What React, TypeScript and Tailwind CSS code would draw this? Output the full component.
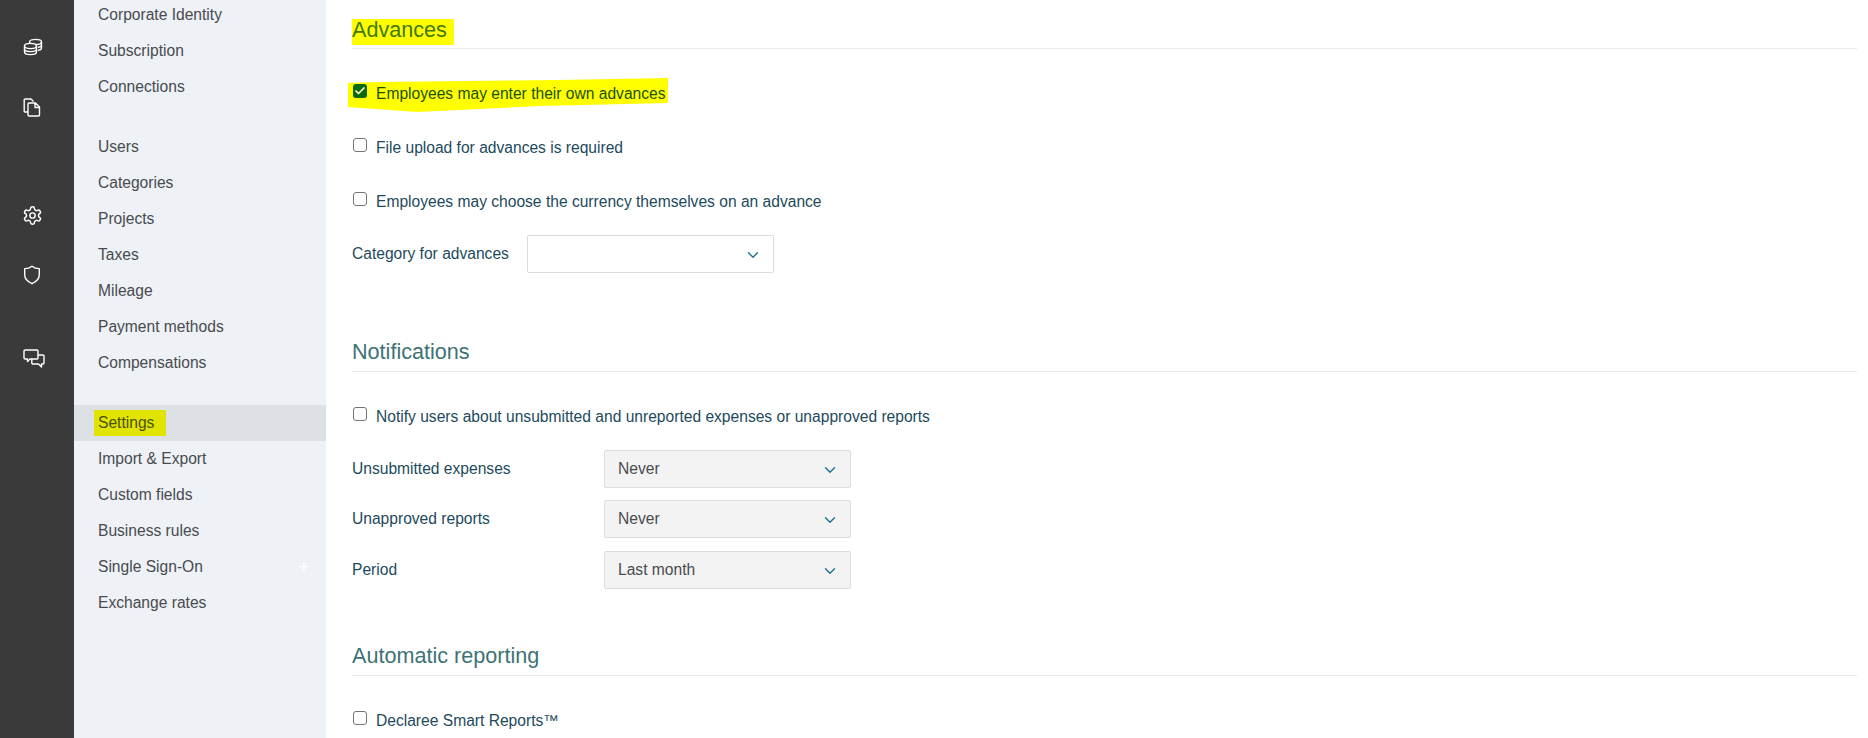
import { Check, ChevronDown } from "lucide-react";

const groupOne = ["Corporate Identity", "Subscription", "Connections"];
const groupTwo = ["Users", "Categories", "Projects", "Taxes", "Mileage", "Payment methods", "Compensations"];
const groupThree = ["Import & Export", "Custom fields", "Business rules", "Single Sign-On", "Exchange rates"];

function NavItem({ label }: { label: string }) {
	return (
		<div className="relative h-9 pl-[24px] leading-[36px] text-[#484b4f]">
			{label}
			{label === "Single Sign-On" && <span className="absolute right-[17px] top-0 text-[18px] text-white">+</span>}
		</div>
	);
}

function Rail() {
	return (
		<div className="w-[74px] shrink-0 bg-[#3a3a3a] text-white flex flex-col items-start pl-[23px]">
			<svg className="mt-[38px]" width="20" height="18" viewBox="0 0 20 18" fill="none" stroke="currentColor" strokeWidth="1.4" strokeLinecap="round">
				<ellipse cx="12.5" cy="4" rx="6" ry="2.6" />
				<path d="M18.5 4v6c0 1-1.2 2-3 2.3M18.5 7c0 1-1.2 2-3 2.3" />
				<ellipse cx="7.5" cy="8" rx="6" ry="2.6" fill="#3a3a3a" />
				<path d="M1.5 8v6c0 1.5 2.7 2.6 6 2.6s6-1.1 6-2.6V8M1.5 11c0 1.5 2.7 2.6 6 2.6s6-1.1 6-2.6" />
			</svg>
			<svg className="mt-[41px]" width="18" height="20" viewBox="0 0 18 20" fill="none" stroke="currentColor" strokeWidth="1.4" strokeLinejoin="round">
				<path d="M5 15H2.2A1 1 0 0 1 1.2 14V3a1 1 0 0 1 1-1H8l2.5 2.500" />
				<path d="M6 6h6.500l4 4v8a1 1 0 0 1-1 1H6a1 1 0 0 1-1-1V7a1 1 0 0 1 1-1zM12 6v4.500h4.500" />
			</svg>
			<svg className="mt-[88px] ml-[-1px]" width="21" height="21" viewBox="0 0 24 24" fill="none" stroke="currentColor" strokeWidth="1.7" strokeLinecap="round" strokeLinejoin="round">
				<path d="M12.22 2h-.44a2 2 0 0 0-2 2v.18a2 2 0 0 1-1 1.73l-.43.25a2 2 0 0 1-2 0l-.15-.08a2 2 0 0 0-2.73.73l-.22.38a2 2 0 0 0 .73 2.73l.15.1a2 2 0 0 1 1 1.72v.51a2 2 0 0 1-1 1.74l-.15.09a2 2 0 0 0-.73 2.73l.22.38a2 2 0 0 0 2.73.73l.15-.08a2 2 0 0 1 2 0l.43.25a2 2 0 0 1 1 1.73V20a2 2 0 0 0 2 2h.44a2 2 0 0 0 2-2v-.18a2 2 0 0 1 1-1.73l.43-.25a2 2 0 0 1 2 0l.15.08a2 2 0 0 0 2.73-.73l.22-.39a2 2 0 0 0-.73-2.73l-.15-.08a2 2 0 0 1-1-1.74v-.5a2 2 0 0 1 1-1.74l.15-.09a2 2 0 0 0 .73-2.73l-.22-.38a2 2 0 0 0-2.73-.73l-.15.08a2 2 0 0 1-2 0l-.43-.25a2 2 0 0 1-1-1.73V4a2 2 0 0 0-2-2z" />
				<circle cx="12" cy="12" r="3" />
			</svg>
			<svg className="mt-[39px]" width="18" height="20" viewBox="0 0 18 20" fill="none" stroke="currentColor" strokeWidth="1.4" strokeLinejoin="round">
				<path d="M9 1.200c2 1.600 4.500 2.400 7.300 2.400v6.200c0 4-3 7-7.300 8.900-4.300-1.900-7.300-4.900-7.300-8.900V3.600C4.500 3.600 7 2.800 9 1.200z" />
			</svg>
			<svg className="mt-[64px]" width="22" height="20" viewBox="0 0 22 20" fill="none" stroke="currentColor" strokeWidth="1.4" strokeLinejoin="round">
				<path d="M2.200 1h11.600a1.200 1.200 0 0 1 1.200 1.200v6.600a1.200 1.200 0 0 1-1.200 1.200H7l-2.500 2.400V10H2.200A1.200 1.200 0 0 1 1 8.800V2.200A1.200 1.200 0 0 1 2.200 1z" />
				<path d="M15 6h4.800A1.200 1.200 0 0 1 21 7.200v6.600a1.200 1.200 0 0 1-1.200 1.200H18.500v3l-3-3H10a1.200 1.200 0 0 1-1.200-1.200V10" />
			</svg>
		</div>
	);
}

function Sidebar() {
	return (
		<div className="w-[252px] shrink-0 bg-[#eef1f5]">
			<div className="mt-[-3px]">
				{groupOne.map(item => (
					<NavItem key={item} label={item} />
				))}
			</div>
			<div className="mt-[24px]">
				{groupTwo.map(item => (
					<NavItem key={item} label={item} />
				))}
			</div>
			<div className="mt-[24px] h-9 bg-[#dde0e4] flex items-center pl-[20px]">
				<span className="h-[26px] w-[72px] bg-[#e0e400] pl-[4px] leading-[26px] text-[#4c5000]">Settings</span>
			</div>
			{groupThree.map(item => (
				<NavItem key={item} label={item} />
			))}
		</div>
	);
}

function Heading({ children }: { children: string }) {
	return <h2 className="h-[34px] border-b border-[#eaeaea] text-[21.6px] leading-[28px] text-[#3e7376]">{children}</h2>;
}

function CheckRow({ label, className }: { label: string; className: string }) {
	return (
		<div className={`flex items-center gap-[9px] h-[22px] text-[#1d4a5c] ${className}`}>
			<span className="ml-[1px] h-[14px] w-[14px] mt-[-4px] rounded-[3px] border border-[#767676] bg-white" />
			<span className="pt-[2px]">{label}</span>
		</div>
	);
}

function Select({ value, muted }: { value?: string; muted?: boolean }) {
	return (
		<div className={`h-[38px] w-[247px] rounded-[2px] border border-[#dcdcdc] flex items-center justify-between pl-[13px] pr-[11px] text-[#484b4f] ${muted ? "bg-[#f3f3f3]" : "bg-white"}`}>
			<span className="mt-[-1px]">{value}</span>
			<ChevronDown size={18} strokeWidth={1.8} className="text-[#1a6f8c] mt-[1px]" />
		</div>
	);
}

function SelectRow({ label, value, className }: { label: string; value: string; className: string }) {
	return (
		<div className={`flex items-center text-[#1d4a5c] ${className}`}>
			<span className="w-[252px] mt-[-1px]">{label}</span>
			<Select value={value} muted />
		</div>
	);
}

function App() {
	return (
		<div className="flex h-[738px] w-[1868px] overflow-hidden bg-white text-[15.6px] font-['Liberation_Sans',Arial,sans-serif]">
			<Rail />
			<Sidebar />
			<div className="flex-1 pl-[26px] pr-[11px] pt-[19px]">
				<h2 className="h-[30px] border-b border-[#eaeaea] text-[21.6px] text-[#3f7a00]">
					<span className="block h-[26px] w-[102px] bg-[#ffff00] leading-[22px]">Advances</span>
				</h2>
				<div className="relative mt-[33px] flex items-center gap-[9px] h-[22px] text-[#1b5000]">
					{/* hand drawn marker stroke from the original screenshot */}
					<svg className="absolute left-[-4px] top-[-4px]" width="320" height="34" viewBox="0 0 320 34">
						<polygon points="0,5 29,4 209,2 320,0 320,25 192,28 69,34 0,29" fill="#ffff00" />
					</svg>
					<span className="relative ml-[1px] h-[14px] w-[14px] mt-[-4px] rounded-[3px] bg-[#0b6b10] flex items-center justify-center">
						<Check size={12} strokeWidth={3.5} className="text-[#ffffc8]" />
					</span>
					<span className="relative pt-[2px]">Employees may enter their own advances</span>
				</div>
				<CheckRow label="File upload for advances is required" className="mt-[32px]" />
				<CheckRow label="Employees may choose the currency themselves on an advance" className="mt-[32px]" />
				<div className="mt-[23px] flex items-center text-[#1d4a5c]">
					<span className="w-[175px] mt-[-1px]">Category for advances</span>
					<Select />
				</div>
				<div className="mt-[65px]">
					<Heading>Notifications</Heading>
				</div>
				<CheckRow label="Notify users about unsubmitted and unreported expenses or unapproved reports" className="mt-[33px]" />
				<SelectRow label="Unsubmitted expenses" value="Never" className="mt-[23px]" />
				<SelectRow label="Unapproved reports" value="Never" className="mt-[12px]" />
				<SelectRow label="Period" value="Last month" className="mt-[13px]" />
				<div className="mt-[53px]">
					<Heading>Automatic reporting</Heading>
				</div>
				<CheckRow label="Declaree Smart Reports™" className="mt-[33px]" />
			</div>
		</div>
	);
}

export default App;
